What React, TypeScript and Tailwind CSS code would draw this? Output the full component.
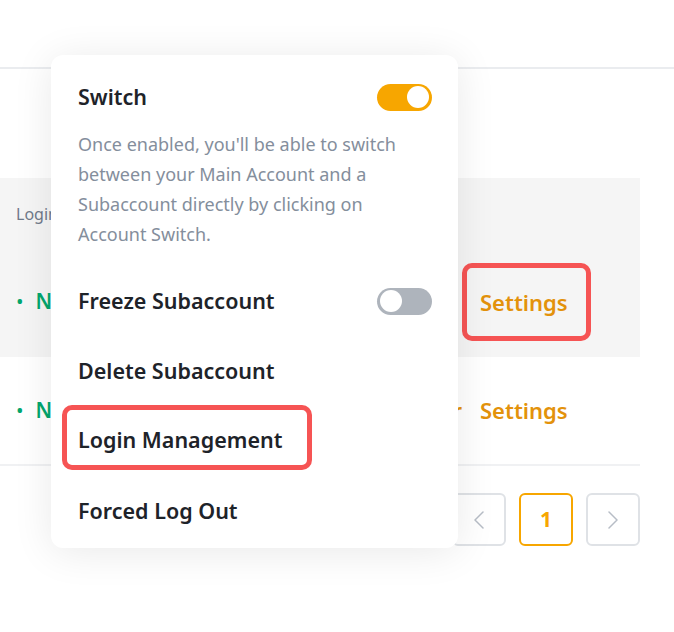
import React from "react";

function Toggle({ on }: { on: boolean }) {
  return (
    <div
      className={
        on
          ? "w-[55px] h-[27px] rounded-full bg-[#f7a600] flex items-center justify-end px-[3px]"
          : "w-[55px] h-[27px] rounded-full bg-[#aeb4bc] flex items-center justify-start px-[3px]"
      }
    >
      <div className="w-[22px] h-[22px] rounded-full bg-white" />
    </div>
  );
}

function Chevron({ dir }: { dir: "left" | "right" }) {
  return (
    <svg width="12" height="18" viewBox="0 0 12 18" fill="none">
      <path
        d={dir === "left" ? "M10 1 L2 9 L10 17" : "M2 1 L10 9 L2 17"}
        stroke="#b7bdc6"
        strokeWidth="1.5"
        strokeLinecap="round"
        strokeLinejoin="round"
      />
    </svg>
  );
}

function Status() {
  return (
    <div className="flex items-center whitespace-nowrap">
      <span className="text-[#03a66d] text-[20px] mr-[12px]">•</span>
      <span className="text-[#03a66d] text-[21px] font-semibold">Normal</span>
    </div>
  );
}

export default function App() {
  const menuItems = ["Freeze Subaccount", "Delete Subaccount", "Login Management", "Forced Log Out"];
  const item = "text-[21.5px] font-semibold text-[#1e2329]";

  return (
    <div className="relative w-[674px] h-[632px] bg-white overflow-hidden font-['Noto_Sans',sans-serif]">
      <div className="h-[69px] border-b-2 border-[#eaecef]" />

      <div className="pr-[34px] pt-[109px]">
        {/* row 1 */}
        <div className="bg-[#f5f5f5] h-[179px] flex flex-col pl-4">
          <div className="mt-[24px] whitespace-nowrap h-[24px] leading-[24px] text-[16px] text-[#707a8a]">
            Login Status
          </div>
          <div className="mt-[37px] flex items-center">
            <div className="w-[446px] flex items-center">
              <Status />
            </div>
            <div className="w-[129px] h-[78px] border-[5px] border-[#f65454] rounded-[10px] pl-[13px] flex items-center">
              <span className="text-[#e3920b] text-[22px] font-semibold">Settings</span>
            </div>
          </div>
        </div>

        {/* row 2 */}
        <div className="h-[109px] border-b-2 border-[#f0f1f3] flex items-center pl-4">
          <div className="w-[446px] flex items-center">
            <Status />
            <span className="ml-auto text-[#e3920b] text-[22px] font-semibold">Transfer</span>
          </div>
          <span className="ml-[18px] text-[#e3920b] text-[22px] font-semibold">Settings</span>
        </div>

        {/* pagination */}
        <div className="mt-[27px] flex justify-end gap-[13px]">
          <div className="w-[54px] h-[53px] rounded-[6px] border-2 border-[#dfe2e6] flex items-center justify-center">
            <Chevron dir="left" />
          </div>
          <div className="w-[54px] h-[53px] rounded-[6px] border-2 border-[#f7a600] flex items-center justify-center text-[#f7a600] text-[21px] font-bold">
            1
          </div>
          <div className="w-[54px] h-[53px] rounded-[6px] border-2 border-[#dfe2e6] flex items-center justify-center">
            <Chevron dir="right" />
          </div>
        </div>
      </div>

      {/* popover menu */}
      <div className="absolute left-[51px] top-[55px] w-[407px] h-[493px] rounded-[12px] bg-white shadow-[0_4px_40px_rgba(0,0,0,0.09)] pl-[27px] pr-[26px] pt-[28px]">
        <div className="flex items-center justify-between h-[28px]">
          <span className={item}>Switch</span>
          <Toggle on />
        </div>
        <p className="mt-[18px] text-[18px] leading-[30px] text-[#848e9c] pr-[10px]">
          Once enabled, you'll be able to switch between your Main Account and a Subaccount directly by clicking on
          Account Switch.
        </p>
        <div className="mt-[17px]">
          {menuItems.map((label) =>
            label === "Login Management" ? (
              <div key={label} className="h-[70px] flex items-start">
                <div className="-mt-px -ml-[16px] w-[250px] h-[65px] border-[5px] border-[#f65454] rounded-[10px] pl-[11px] pt-[6px] flex items-center">
                  <span className={item}>{label}</span>
                </div>
              </div>
            ) : (
              <div key={label} className="h-[70px] flex items-center justify-between">
                <span className={item}>{label}</span>
                {label === "Freeze Subaccount" && <Toggle on={false} />}
              </div>
            )
          )}
        </div>
      </div>
    </div>
  );
}
